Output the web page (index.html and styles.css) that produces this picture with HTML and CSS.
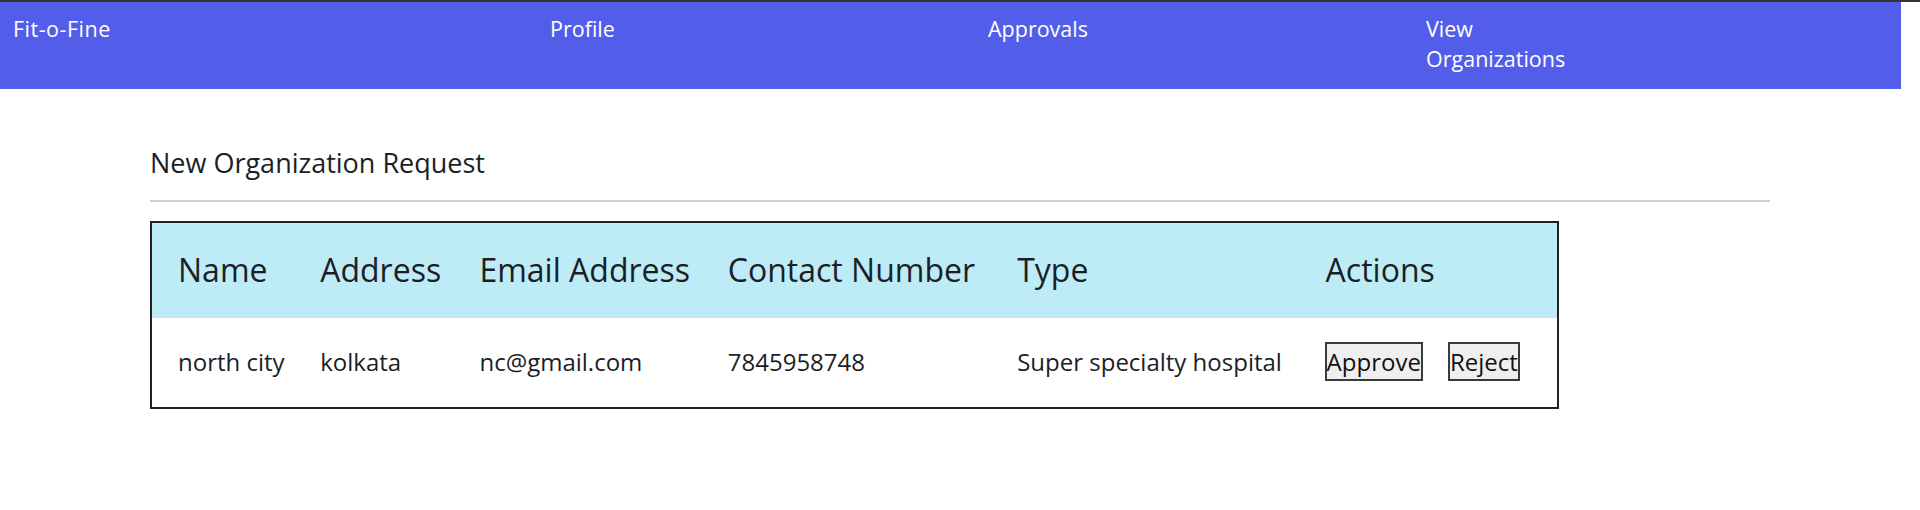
FILE: index.html
```html
<!DOCTYPE html>
<html lang="en">
<head>
<meta charset="utf-8">
<title>Fit-o-Fine</title>
<link rel="stylesheet" href="styles.css">
</head>
<body>
<div class="topline"></div>
<nav class="navbar">
  <a class="brand" href="#">Fit-o-Fine</a>
  <a class="nav-link" href="#">Profile</a>
  <a class="nav-link" href="#">Approvals</a>
  <a class="nav-link" href="#">View Organizations</a>
</nav>
<main class="container">
  <h2 class="page-title">New Organization Request</h2>
  <hr class="divider">
  <table class="req-table">
    <colgroup>
      <col class="c-name"><col class="c-addr"><col class="c-email"><col class="c-phone"><col class="c-type"><col class="c-act">
    </colgroup>
    <thead>
      <tr>
        <th>Name</th>
        <th>Address</th>
        <th>Email Address</th>
        <th>Contact Number</th>
        <th>Type</th>
        <th>Actions</th>
      </tr>
    </thead>
    <tbody>
      <tr>
        <td>north city</td>
        <td>kolkata</td>
        <td>nc@gmail.com</td>
        <td>7845958748</td>
        <td>Super specialty hospital</td>
        <td class="actions"><button class="btn">Approve</button><button class="btn">Reject</button></td>
      </tr>
    </tbody>
  </table>
</main>
</body>
</html>
```
FILE: styles.css
```css
html, body {
  margin: 0;
  padding: 0;
  background: #ffffff;
}
body {
  font-family: "Open Sans", "Noto Sans", sans-serif;
  color: #1c1e26;
}
.topline {
  height: 2px;
  background: #333333;
}
.navbar {
  width: 99%;
  height: 87px;
  box-sizing: border-box;
  background: #525de9;
  padding: 12px 0 0 13px;
  display: grid;
  grid-template-columns: 537px 438px 438px 150px;
  align-items: start;
}
.navbar a {
  color: #ffffff;
  text-decoration: none;
  font-size: 21.5px;
  line-height: 30px;
}
.navbar .brand {
  letter-spacing: 0.5px;
}
.container {
  width: 1620px;
  margin: 0 auto;
  padding-top: 57px;
}
.page-title {
  margin: 0;
  font-size: 27px;
  font-weight: 400;
  line-height: 34px;
  color: #1c1e26;
}
.divider {
  margin: 20px 0 19px;
  border: 0;
  border-top: 2px solid #d0d0d0;
  height: 0;
}
.req-table {
  border-collapse: collapse;
  border: 2px solid #222222;
  table-layout: fixed;
  width: 1409px;
}
.c-name { width: 143px; }
.c-addr { width: 159px; }
.c-email { width: 248px; }
.c-phone { width: 289px; }
.c-type { width: 308px; }
.c-act { width: 258px; }
.req-table th,
.req-table td {
  text-align: left;
  padding: 0 0 0 26px;
  white-space: nowrap;
}
.req-table thead tr {
  background: #bdecf7;
  height: 96px;
}
.req-table th {
  font-size: 32px;
  font-weight: 400;
  padding-bottom: 2px;
}
.req-table tbody tr {
  height: 90px;
}
.req-table td {
  font-size: 24px;
  padding-bottom: 3px;
}
.req-table td.actions {
  padding-left: 25px;
}
.btn {
  font-family: inherit;
  font-size: 24px;
  color: #111111;
  background: #efefef;
  border: 2px solid #3a3a3a;
  padding: 1px 0;
  margin: 0 25px 0 0;
  line-height: normal;
  vertical-align: middle;
}
```
